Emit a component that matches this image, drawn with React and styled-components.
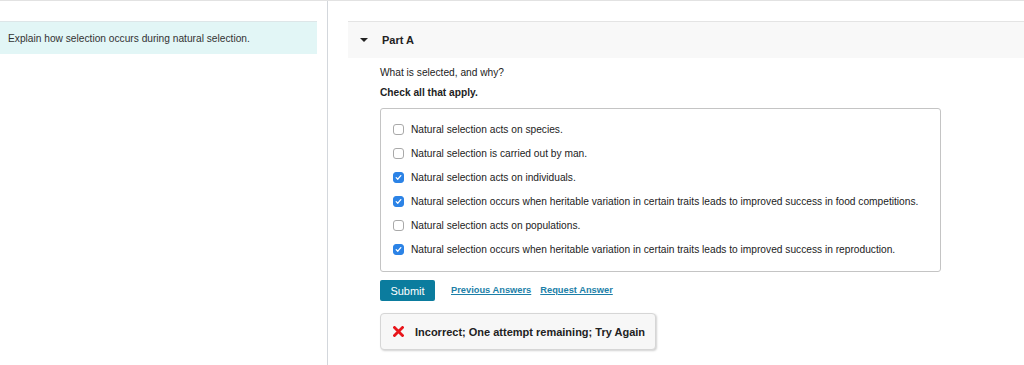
import React from 'react'
import styled, { createGlobalStyle } from 'styled-components'

const GlobalStyle = createGlobalStyle`
    html, body {
        margin: 0;
        padding: 0;
        background: #fff;
    }
    body {
        font-family: "Liberation Sans", Arial, sans-serif;
        color: #222;
    }
`

const Page = styled.div`
    display: flex;
    width: 1024px;
    height: 365px;
    border-top: 1px solid #e2e2e2;
    box-sizing: border-box;
    overflow: hidden;
`

const Sidebar = styled.aside`
    width: 328px;
    flex-shrink: 0;
    padding-top: 20px;
    border-right: 1px solid #d3d7dc;
    box-sizing: border-box;
`

const Prompt = styled.div`
    margin-right: 10px;
    height: 33px;
    display: flex;
    align-items: center;
    padding-left: 8px;
    background: #e2f6f6;
    border-top: 1px solid #dde6e8;
    box-sizing: border-box;
    font-size: 10.2px;
    color: #333;
`

const Main = styled.main`
    flex: 1;
    padding-top: 20px;
    padding-left: 20px;
`

const PartHeader = styled.div`
    height: 37px;
    display: flex;
    align-items: center;
    background: #f8f8f8;
    border-top: 1px solid #e4e4e4;
    box-sizing: border-box;
    padding-left: 12px;
`

const Caret = styled.span`
    width: 0;
    height: 0;
    border-left: 4px solid transparent;
    border-right: 4px solid transparent;
    border-top: 4px solid #222;
    margin-right: 14px;
`

const PartTitle = styled.h2`
    margin: 0;
    font-size: 11px;
    font-weight: bold;
    color: #222;
`

const Body = styled.section`
    padding-left: 32px;
    width: 561px;
`

const Question = styled.p`
    margin: 8px 0 0;
    font-size: 10.2px;
    line-height: 14px;
    color: #222;
`

const Instruction = styled.p`
    margin: 6px 0 0;
    font-size: 10.2px;
    line-height: 14px;
    font-weight: bold;
    color: #222;
`

const OptionList = styled.ul`
    list-style: none;
    margin: 8px 0 0;
    padding: 8px 12px 10px;
    border: 1px solid #c4c4c4;
    border-radius: 3px;
`

const Option = styled.li`
    height: 24px;
    display: flex;
    align-items: center;
    gap: 7px;
    font-size: 10.2px;
    color: #222;
    white-space: nowrap;
`

const Box = styled.span`
    width: 11px;
    height: 11px;
    box-sizing: border-box;
    border-radius: 3px;
    flex-shrink: 0;
    display: flex;
    align-items: center;
    justify-content: center;
    background: ${(p) => (p.$checked ? '#2c83e6' : '#fff')};
    border: 1px solid ${(p) => (p.$checked ? '#2c83e6' : '#a9a9a9')};
`

const Actions = styled.div`
    display: flex;
    align-items: center;
    margin-top: 8px;
`

const SubmitButton = styled.button`
    width: 55px;
    height: 21px;
    padding: 0;
    border: none;
    border-radius: 2px;
    background: #0b7c9e;
    color: #fff;
    font-family: "Liberation Sans", Arial, sans-serif;
    font-size: 11px;
    margin-right: 16px;
`

const ActionLink = styled.a`
    font-size: 9.3px;
    font-weight: bold;
    color: #1c7fa8;
    text-decoration: underline;
    margin-right: 9px;
    margin-top: -2px;
`

const Feedback = styled.div`
    margin-top: 12px;
    width: 276px;
    height: 37px;
    box-sizing: border-box;
    display: flex;
    align-items: center;
    padding-left: 12px;
    gap: 11px;
    background: #f7f7f7;
    border: 1px solid #d6d6d6;
    border-radius: 4px;
    box-shadow: 1px 1px 2px rgba(0, 0, 0, 0.18);
    font-size: 11px;
    font-weight: bold;
    color: #222;
`

const Check = () => (
    <svg width="7" height="7" viewBox="0 0 7 7">
        <path d="M1.2 3.6 L2.8 5.2 L5.8 1.6" fill="none" stroke="#fff" strokeWidth="1.3" strokeLinecap="round" strokeLinejoin="round" />
    </svg>
)

const Cross = () => (
    <svg width="11" height="11" viewBox="0 0 11 11">
        <path d="M1.5 1.5 L9.5 9.5 M9.5 1.5 L1.5 9.5" stroke="#e8151b" strokeWidth="2.8" strokeLinecap="square" />
    </svg>
)

const options = [
    { text: 'Natural selection acts on species.', checked: false },
    { text: 'Natural selection is carried out by man.', checked: false },
    { text: 'Natural selection acts on individuals.', checked: true },
    { text: 'Natural selection occurs when heritable variation in certain traits leads to improved success in food competitions.', checked: true },
    { text: 'Natural selection acts on populations.', checked: false },
    { text: 'Natural selection occurs when heritable variation in certain traits leads to improved success in reproduction.', checked: true }
]

export default function App() {
    return (
        <>
            <GlobalStyle />
            <Page>
                <Sidebar>
                    <Prompt>Explain how selection occurs during natural selection.</Prompt>
                </Sidebar>
                <Main>
                    <PartHeader>
                        <Caret />
                        <PartTitle>Part A</PartTitle>
                    </PartHeader>
                    <Body>
                        <Question>What is selected, and why?</Question>
                        <Instruction>Check all that apply.</Instruction>
                        <OptionList>
                            {options.map((o) => (
                                <Option key={o.text}>
                                    <Box $checked={o.checked}>{o.checked && <Check />}</Box>
                                    {o.text}
                                </Option>
                            ))}
                        </OptionList>
                        <Actions>
                            <SubmitButton>Submit</SubmitButton>
                            <ActionLink href="#">Previous Answers</ActionLink>
                            <ActionLink href="#">Request Answer</ActionLink>
                        </Actions>
                        <Feedback>
                            <Cross />
                            Incorrect; One attempt remaining; Try Again
                        </Feedback>
                    </Body>
                </Main>
            </Page>
        </>
    )
}
